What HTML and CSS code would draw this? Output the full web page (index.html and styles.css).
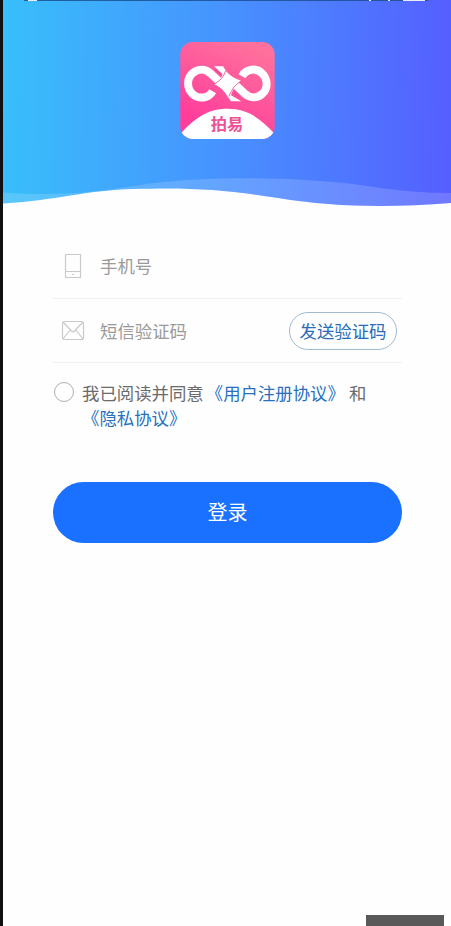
FILE: index.html
```html
<!DOCTYPE html>
<html lang="zh-CN">
<head>
<meta charset="utf-8">
<title>登录</title>
<link rel="stylesheet" href="styles.css">
</head>
<body>
<main class="screen">
  <header class="hero">
    <svg class="hero-bg" viewBox="0 0 448 210" aria-hidden="true">
      <defs>
        <linearGradient id="sky" x1="0" y1="0" x2="1" y2="0.01">
          <stop offset="0" stop-color="#38bffa"/>
          <stop offset="0.5" stop-color="#4792ff"/>
          <stop offset="1" stop-color="#555fff"/>
        </linearGradient>
        <clipPath id="wave"><path d="M0 0H448V203C385 208 330 207 275 198C225 190 190 187 130 189C85 190 55 200 0 203.500Z"/></clipPath>
      </defs>
      <g clip-path="url(#wave)">
        <path fill="url(#sky)" d="M0 0H448V210H0Z"/>
        <path fill="#fff" fill-opacity=".16" d="M0 192.500C60 197 100 191 150 183C210 176 290 177 350 184C390 190 415 193 448 193V210H0Z"/>
      </g>
      <path fill="#1b4f91" opacity=".85" d="M21 0H425V1H21Z"/>
      <path stroke="#e8edf5" fill="none" d="M25 .5H34M366 .5H368M385 .5H387M400 .5H422"/>
    </svg>
    <svg class="logo" viewBox="30 35 285 292" role="img" aria-label="拍易">
      <defs>
        <linearGradient id="pink" x1="0.7" y1="0" x2="0.3" y2="0.85">
          <stop offset="0" stop-color="#ff719c"/>
          <stop offset="1" stop-color="#ff3e9c"/>
        </linearGradient>
        <clipPath id="tile"><rect x="30" y="35" width="285" height="292" rx="38"/></clipPath>
      </defs>
      <g clip-path="url(#tile)">
        <path fill="url(#pink)" d="M30 35H315V327H30Z"/>
        <path fill="#fff" d="M30 312C72 267 110 236 173 236C235 236 273 267 315 312V330H30Z"/>
        <g fill="none" stroke="#fff" stroke-width="24">
          <path d="M128 183C115 205 87 208 69 193C48 175 49 142 70 127C88 113 108 117 122 130L152 158"/>
          <path d="M216 138C229 115 259 112 276 129C295 147 295 176 276 192C260 206 239 203 224 190L194 162"/>
        </g>
        <path fill="#fff" d="M132 108H159L170 125Q190 145 213 151Q191 168 183 195L214 213H183L173 200Q158 172 133 162Q152 149 158 132Z"/>
        <path fill="none" stroke="#ec4c91" stroke-width="2.500" d="M133 161Q158 149 167 122M214 152Q187 168 177 199"/>
        <path fill="none" stroke="#ec4c91" stroke-width="5" d="M135 117L152 133M193 187L208 201"/>
      </g>
      <text class="logo-name" x="171" y="301" text-anchor="middle">拍易</text>
    </svg>
  </header>
  <form class="login">
    <label class="field">
      <svg class="icon" viewBox="0 0 24 26"><path d="M4.500 1.500H19.500V24.500H4.500ZM4.500 18.500H19.500M11 21.500H13"/></svg>
      <span>手机号</span>
    </label>
    <div class="field code">
      <svg class="icon" viewBox="0 0 24 26"><rect x="1.500" y="3.500" width="21" height="18" rx="2"/><path d="M2 4L10.500 13Q12 14.500 13.500 13L22 4M2 21L9 12M22 21L15 12"/></svg>
      <span>短信验证码</span>
      <button type="button" class="send">发送验证码</button>
    </div>
    <div class="agree">
      <i class="radio"></i>
      <p>我已阅读并同意<a class="first">《用户注册协议》</a>和<br><a>《隐私协议》</a></p>
    </div>
    <button type="button" class="submit">登录</button>
  </form>
  <i class="corner"></i>
</main>
</body>
</html>
```
FILE: styles.css
```css
* { box-sizing: border-box; }
body { margin: 0; background: #fff; font-family: "Noto Sans CJK SC", sans-serif; }
.screen {
  position: relative;
  height: 926px;
  border-left: 3px solid #111;
  overflow: hidden;
  background: #fefefe;
}
.hero { display: grid; height: 210px; }
.hero-bg, .logo { grid-area: 1 / 1; }
.hero-bg { width: 448px; height: 210px; }
.logo { width: 95px; height: 97px; margin: 41.500px 0 0 177px; }
.logo-name { font-size: 49px; font-weight: 700; fill: #eb5296; }
.login { width: 349px; margin: 24px 0 0 50px; }
.field {
  display: flex;
  align-items: center;
  height: 64.500px;
  border-bottom: 1px solid #f0f0f0;
  padding: 0 5px 0 8px;
  color: #9a9a9a;
  font-size: 17.400px;
  line-height: 26px;
}
.code { padding-top: 1.500px; }
.icon { width: 24px; height: 26px; margin-right: 15px; fill: none; stroke: #cacaca; stroke-width: 1.200; }
.send {
  width: 108px;
  height: 38px;
  margin-left: auto;
  padding: 0;
  border: 1px solid #a3bace;
  border-radius: 20px;
  background: none;
  color: #2b6cb6;
  font: 400 17.400px/26px "Noto Sans CJK SC", sans-serif;
}
.agree { display: flex; height: 118.500px; padding: 19px 0 0 1px; }
.radio { width: 20px; height: 20px; border: 1px solid #b0b0b0; border-radius: 50%; }
.agree p { margin: -1px 0 0 8px; color: #6b6b6b; font-size: 17.400px; line-height: 24.500px; white-space: nowrap; }
.agree a { color: #2870be; }
.agree .first { margin: 0 4px 0 2px; }
.submit {
  display: block;
  width: 349px;
  height: 61px;
  border: 0;
  border-radius: 31px;
  background: #1a70ff;
  color: #fff;
  font: 400 20px/30px "Noto Sans CJK SC", sans-serif;
}
.corner { position: absolute; right: 7px; bottom: 0; width: 78px; height: 11px; background: #595959; }
```
